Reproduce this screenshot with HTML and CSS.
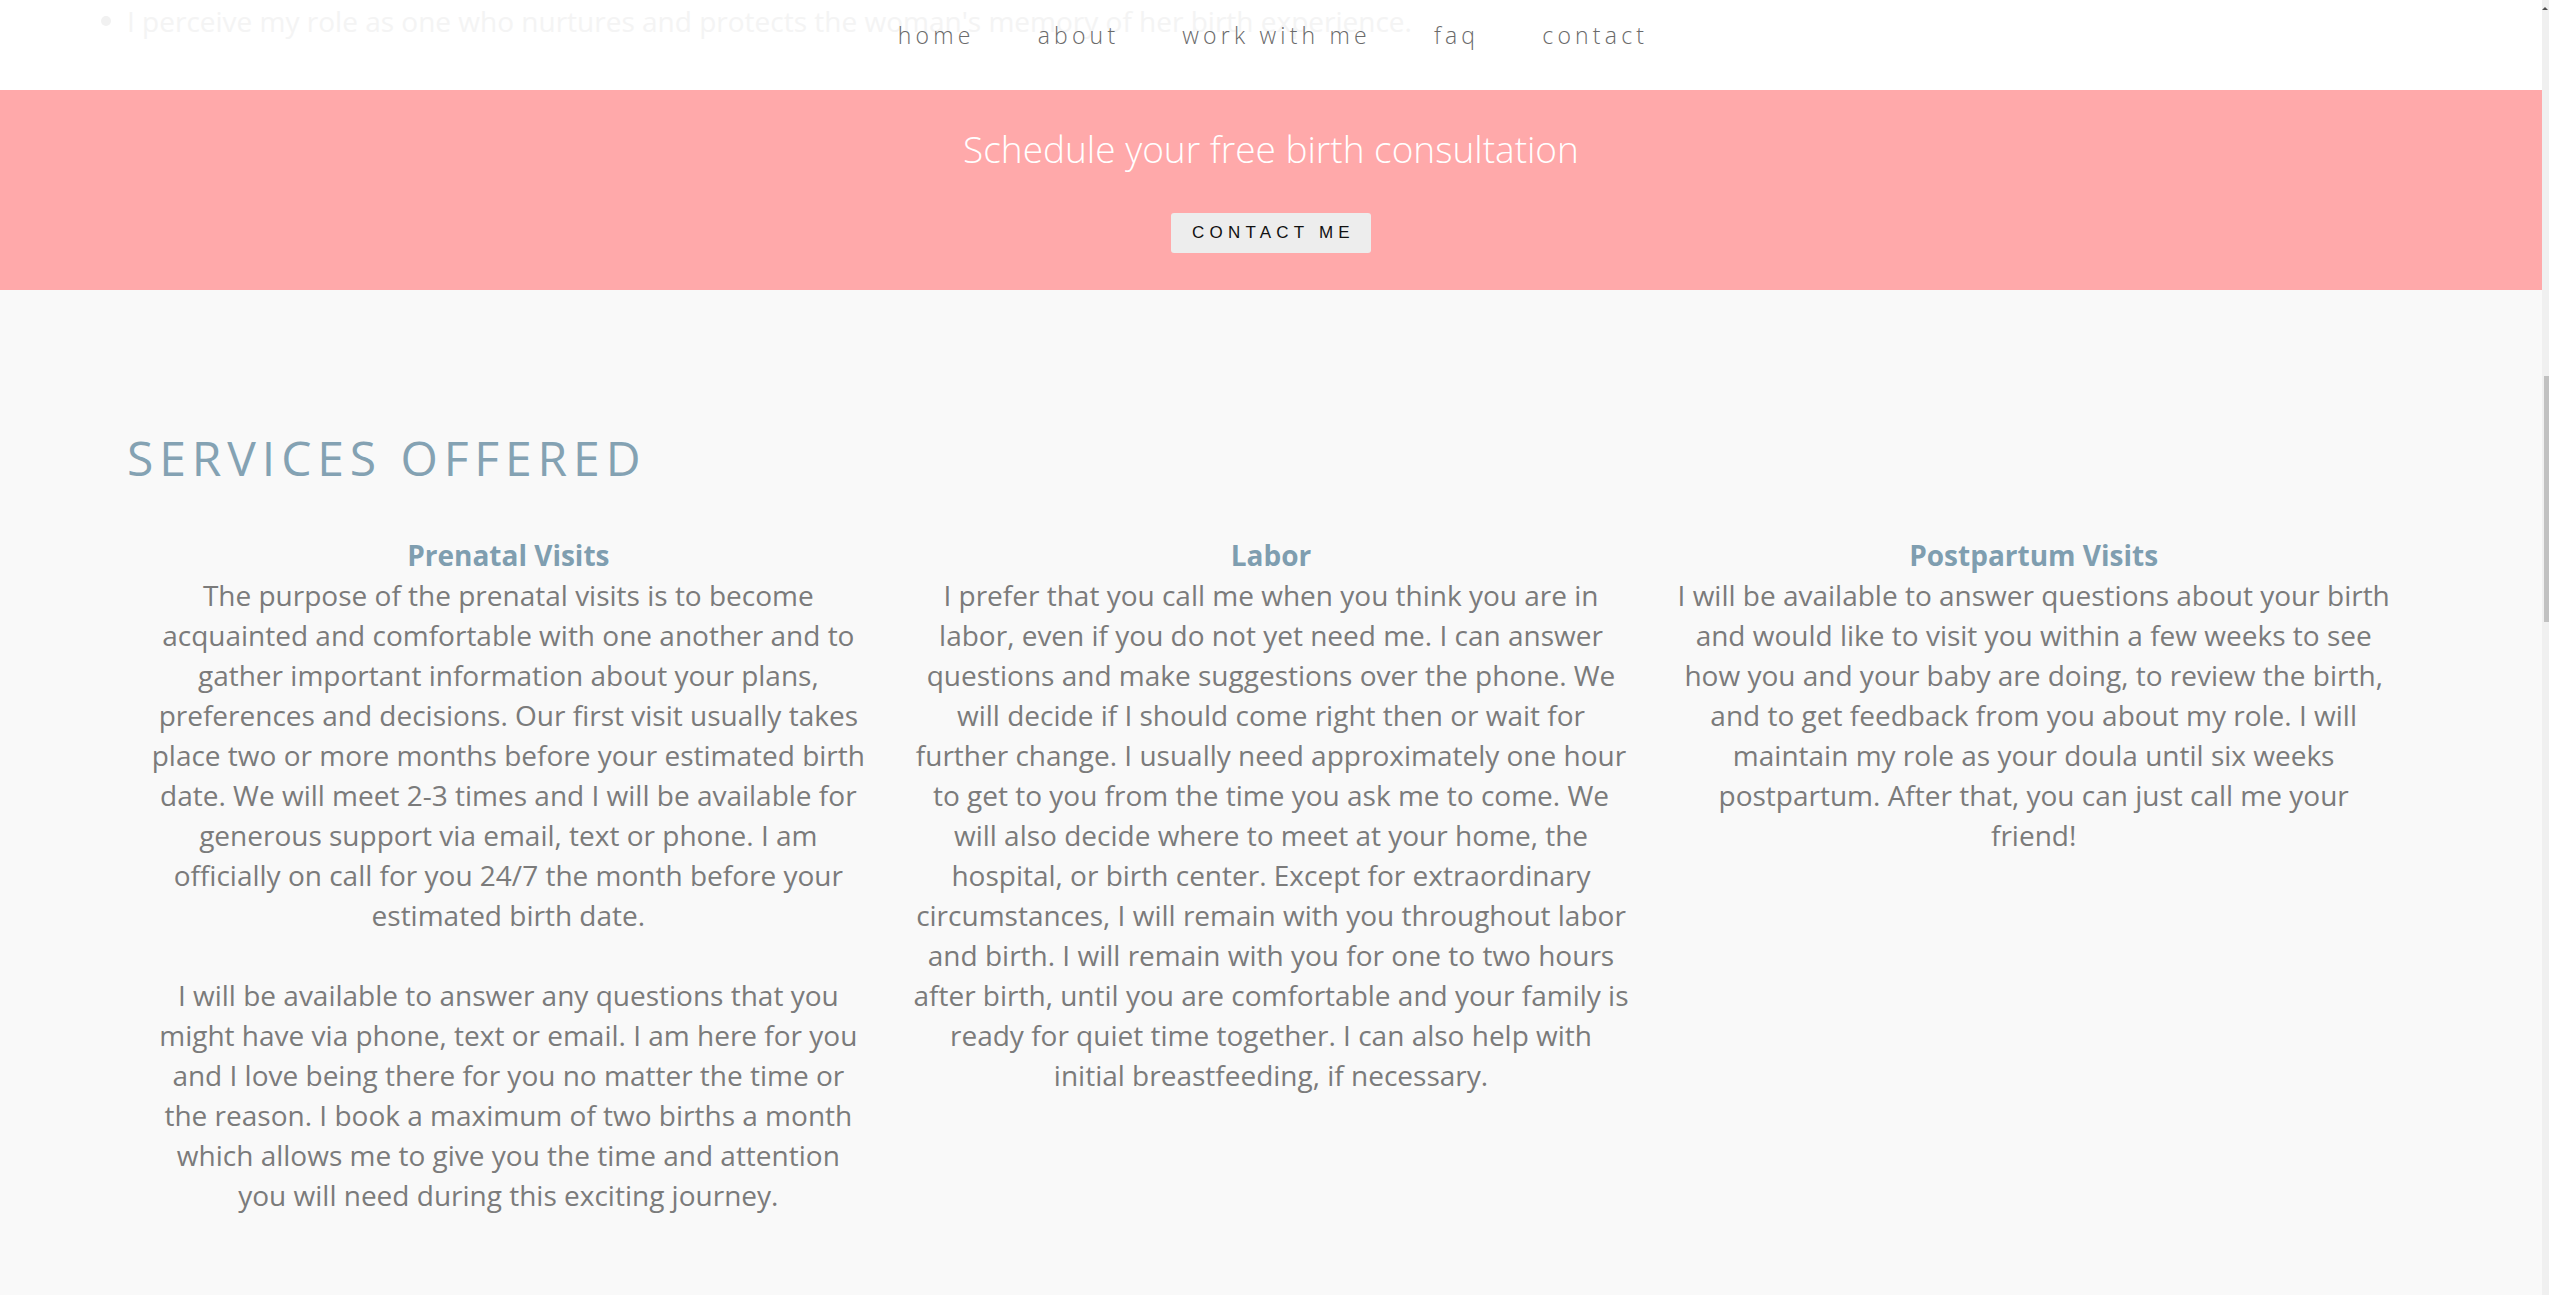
FILE: index.html
```html
<!DOCTYPE html>
<html lang="en">
<head>
<meta charset="utf-8">
<title>Services Offered</title>
<link rel="stylesheet" href="styles.css">
</head>
<body>
<div class="page">
  <header class="site-header">
    <ul class="ghost-list">
      <li>I perceive my role as one who nurtures and protects the woman's memory of her birth experience.</li>
    </ul>
    <nav class="main-nav">
      <a href="#">home</a>
      <a href="#">about</a>
      <a href="#">work with me</a>
      <a href="#">faq</a>
      <a href="#">contact</a>
    </nav>
  </header>

  <section class="cta">
    <h2 class="cta-title">Schedule your free birth consultation</h2>
    <a class="cta-button" href="#">CONTACT ME</a>
  </section>

  <section class="services">
    <h1 class="services-title">SERVICES OFFERED</h1>
    <div class="service-grid">
      <div class="service">
        <h3 class="service-name">Prenatal Visits</h3>
        <p class="service-text">The purpose of the prenatal visits is to become<br>acquainted and comfortable with one another and to<br>gather important information about your plans,<br>preferences and decisions. Our first visit usually takes<br>place two or more months before your estimated birth<br>date. We will meet 2-3 times and I will be available for<br>generous support via email, text or phone. I am<br>officially on call for you 24/7 the month before your<br>estimated birth date.</p>
        <p class="service-text">I will be available to answer any questions that you<br>might have via phone, text or email. I am here for you<br>and I love being there for you no matter the time or<br>the reason. I book a maximum of two births a month<br>which allows me to give you the time and attention<br>you will need during this exciting journey.</p>
      </div>
      <div class="service">
        <h3 class="service-name">Labor</h3>
        <p class="service-text">I prefer that you call me when you think you are in<br>labor, even if you do not yet need me. I can answer<br>questions and make suggestions over the phone. We<br>will decide if I should come right then or wait for<br>further change. I usually need approximately one hour<br>to get to you from the time you ask me to come. We<br>will also decide where to meet at your home, the<br>hospital, or birth center. Except for extraordinary<br>circumstances, I will remain with you throughout labor<br>and birth. I will remain with you for one to two hours<br>after birth, until you are comfortable and your family is<br>ready for quiet time together. I can also help with<br>initial breastfeeding, if necessary.</p>
      </div>
      <div class="service">
        <h3 class="service-name">Postpartum Visits</h3>
        <p class="service-text">I will be available to answer questions about your birth<br>and would like to visit you within a few weeks to see<br>how you and your baby are doing, to review the birth,<br>and to get feedback from you about my role. I will<br>maintain my role as your doula until six weeks<br>postpartum. After that, you can just call me your<br>friend!</p>
      </div>
    </div>
  </section>
</div>
<div class="scrollbar"><div class="scroll-arrow"></div><div class="scroll-thumb"></div></div>
</body>
</html>
```

FILE: styles.css
```css
html, body {
  margin: 0;
  padding: 0;
}
body {
  background: #f9f9f9;
  font-family: "Open Sans", "Noto Sans", sans-serif;
  color: #7b7b7b;
  min-height: 1295px;
}
.page {
  margin-right: 7px;
}

/* header */
.site-header {
  background: #ffffff;
  height: 90px;
  display: grid;
  overflow: hidden;
}
.ghost-list,
.main-nav {
  grid-area: 1 / 1;
}
.ghost-list {
  margin: 0;
  padding: 1px 0 0 127px;
  list-style: none;
  font-size: 28px;
  line-height: 40px;
  color: #f4f4f4;
}
.ghost-list li {
  display: flex;
}
.ghost-list li::before {
  content: "";
  width: 10px;
  height: 10px;
  border-radius: 50%;
  background: #f1f1f1;
  margin: 15px 16px 0 -26px;
  flex: none;
}
.main-nav {
  display: flex;
  justify-content: center;
  align-items: flex-start;
  gap: 63px;
  padding-top: 20px;
  padding-left: 4px;
}
.main-nav a {
  font-size: 23px;
  font-weight: 300;
  letter-spacing: 4.2px;
  line-height: 30px;
  color: #6a6a6a;
  text-decoration: none;
}

/* call to action */
.cta {
  background: #ffa9aa;
  height: 200px;
  box-sizing: border-box;
  padding-top: 35px;
  display: flex;
  flex-direction: column;
  align-items: center;
}
.cta-title {
  margin: 0;
  font-size: 37px;
  font-weight: 300;
  line-height: 48px;
  color: #ffffff;
}
.cta-button {
  margin-top: 40px;
  width: 200px;
  height: 40px;
  box-sizing: border-box;
  padding-left: 5px;
  background: #ededed;
  border-radius: 3px;
  display: flex;
  align-items: center;
  justify-content: center;
  font-family: "Liberation Sans", Arial, sans-serif;
  font-size: 17px;
  letter-spacing: 5.2px;
  color: #111111;
  text-decoration: none;
}

/* services */
.services {
  padding: 139px 127px 60px 127px;
}
.services-title {
  margin: 0;
  font-size: 48px;
  font-weight: 400;
  line-height: 58px;
  letter-spacing: 5.9px;
  color: #84a2b3;
}
.service-grid {
  margin-top: 48px;
  display: grid;
  grid-template-columns: repeat(3, 1fr);
}
.service {
  text-align: center;
}
.service-name {
  margin: 0;
  font-size: 28px;
  font-weight: 700;
  line-height: 40px;
  color: #7f9eb0;
}
.service-text {
  margin: 0 0 40px 0;
  font-size: 28px;
  line-height: 40px;
  white-space: nowrap;
  color: #7b7b7b;
}

/* scrollbar imitation */
.scrollbar {
  position: fixed;
  top: 0;
  right: 0;
  width: 7px;
  height: 100vh;
  background: #f0f0f0;
}
.scroll-arrow {
  position: absolute;
  top: 7px;
  right: 1px;
  width: 0;
  height: 0;
  border-left: 3px solid transparent;
  border-right: 3px solid transparent;
  border-bottom: 3px solid #505050;
}
.scroll-thumb {
  position: absolute;
  top: 376px;
  right: 0;
  width: 5px;
  height: 246px;
  background: #c1c1c1;
}
```
